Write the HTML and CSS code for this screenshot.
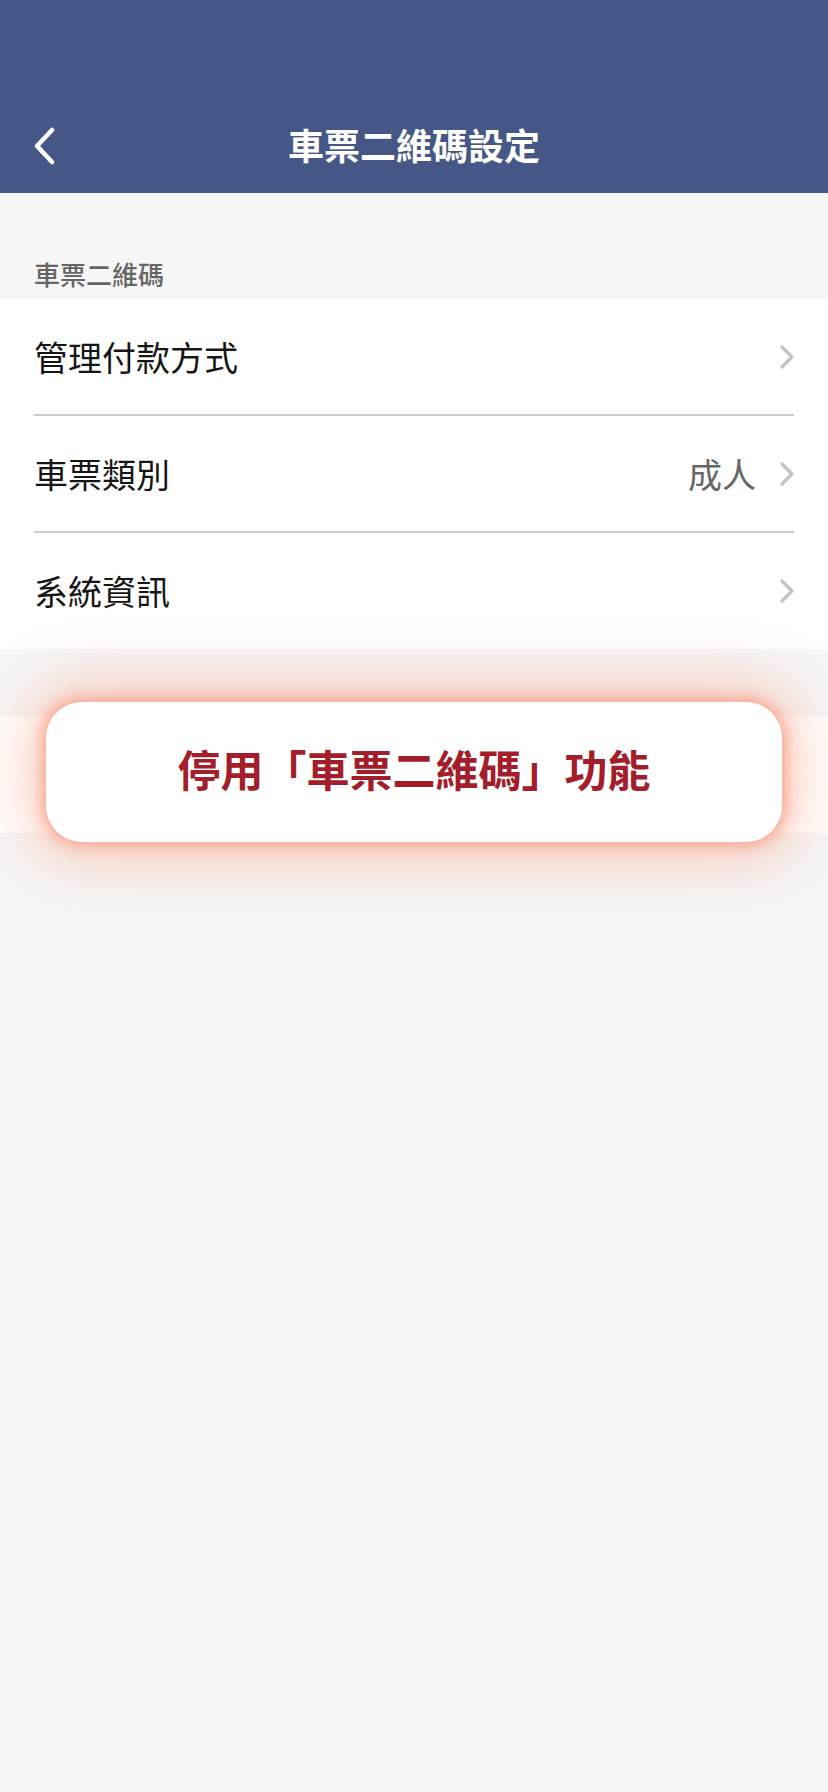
FILE: index.html
```html
<!DOCTYPE html>
<html lang="zh-Hant">
<head>
<meta charset="utf-8">
<title>車票二維碼設定</title>
<link rel="stylesheet" href="styles.css">
</head>
<body>
<header class="navbar">
  <button class="back" aria-label="返回">
    <svg width="24" height="38" viewBox="0 0 24 38"><path d="M20 3 L5 19 L20 35" fill="none" stroke="#ffffff" stroke-width="4.5" stroke-linecap="round" stroke-linejoin="round"/></svg>
  </button>
  <h1 class="title">車票二維碼設定</h1>
</header>

<div class="section-label">車票二維碼</div>
<ul class="list">
  <li class="row">
    <span class="row-text">管理付款方式</span>
    <span class="row-right">
      <svg class="chev" width="18" height="28" viewBox="0 0 18 28"><path d="M4 4 L14 14 L4 24" fill="none" stroke="#c3c3c3" stroke-width="3.2" stroke-linecap="round" stroke-linejoin="round"/></svg>
    </span>
  </li>
  <li class="row">
    <span class="row-text">車票類別</span>
    <span class="row-right">
      <span class="row-value">成人</span>
      <svg class="chev" width="18" height="28" viewBox="0 0 18 28"><path d="M4 4 L14 14 L4 24" fill="none" stroke="#c3c3c3" stroke-width="3.2" stroke-linecap="round" stroke-linejoin="round"/></svg>
    </span>
  </li>
  <li class="row">
    <span class="row-text">系統資訊</span>
    <span class="row-right">
      <svg class="chev" width="18" height="28" viewBox="0 0 18 28"><path d="M4 4 L14 14 L4 24" fill="none" stroke="#c3c3c3" stroke-width="3.2" stroke-linecap="round" stroke-linejoin="round"/></svg>
    </span>
  </li>
</ul>

<div class="disable-band">
  <button class="disable-btn">停用「車票二維碼」功能</button>
</div>
</body>
</html>
```

FILE: styles.css
```css
html, body {
  margin: 0;
  padding: 0;
}
body {
  width: 828px;
  min-height: 1792px;
  background: #f6f6f6;
  font-family: "Noto Sans CJK TC", "Noto Sans", sans-serif;
}
.navbar {
  height: 193px;
  background: #445786;
  display: flex;
  align-items: flex-end;
  justify-content: center;
  position: relative;
  box-sizing: border-box;
  padding-bottom: 21px;
}
.back {
  position: absolute;
  left: 32px;
  top: 127px;
  width: 26px;
  height: 38px;
  padding: 0;
  margin: 0;
  border: 0;
  background: none;
  display: flex;
}
.title {
  margin: 0;
  color: #ffffff;
  font-size: 36px;
  font-weight: 700;
  line-height: 56px;
  letter-spacing: 0;
}
.section-label {
  padding: 63px 34px 7px;
  line-height: 36px;
  font-size: 26px;
  font-weight: 500;
  color: #666666;
}
.list {
  list-style: none;
  margin: 0;
  padding: 0;
  background: #ffffff;
}
.row {
  height: 115px;
  margin: 0 34px;
  display: flex;
  align-items: center;
  justify-content: space-between;
  border-bottom: 2px solid #cdcdcd;
}
.row:last-child {
  border-bottom: 0;
  height: 116px;
}
.row-text {
  font-size: 34px;
  color: #161616;
  line-height: 48px;
}
.row-right {
  display: flex;
  align-items: center;
  gap: 22px;
  margin-right: -2px;
}
.row-value {
  font-size: 34px;
  color: #666666;
  line-height: 48px;
}
.chev {
  display: block;
}
.disable-band {
  margin-top: 68px;
  height: 116px;
  background: #ffffff;
  position: relative;
}
.disable-btn {
  position: absolute;
  left: 46px;
  right: 46px;
  top: -15px;
  bottom: -9px;
  border: 0;
  border-radius: 36px;
  background: #ffffff;
  box-shadow: 0 0 14px 4px rgba(249, 160, 135, 0.85), 0 0 60px 18px rgba(248, 140, 110, 0.42);
  font-family: "Noto Sans CJK TC", "Noto Sans", sans-serif;
  font-size: 43px;
  font-weight: 700;
  color: #a31d2b;
  padding: 0 0 8px;
  display: flex;
  align-items: center;
  justify-content: center;
  cursor: pointer;
}
```
